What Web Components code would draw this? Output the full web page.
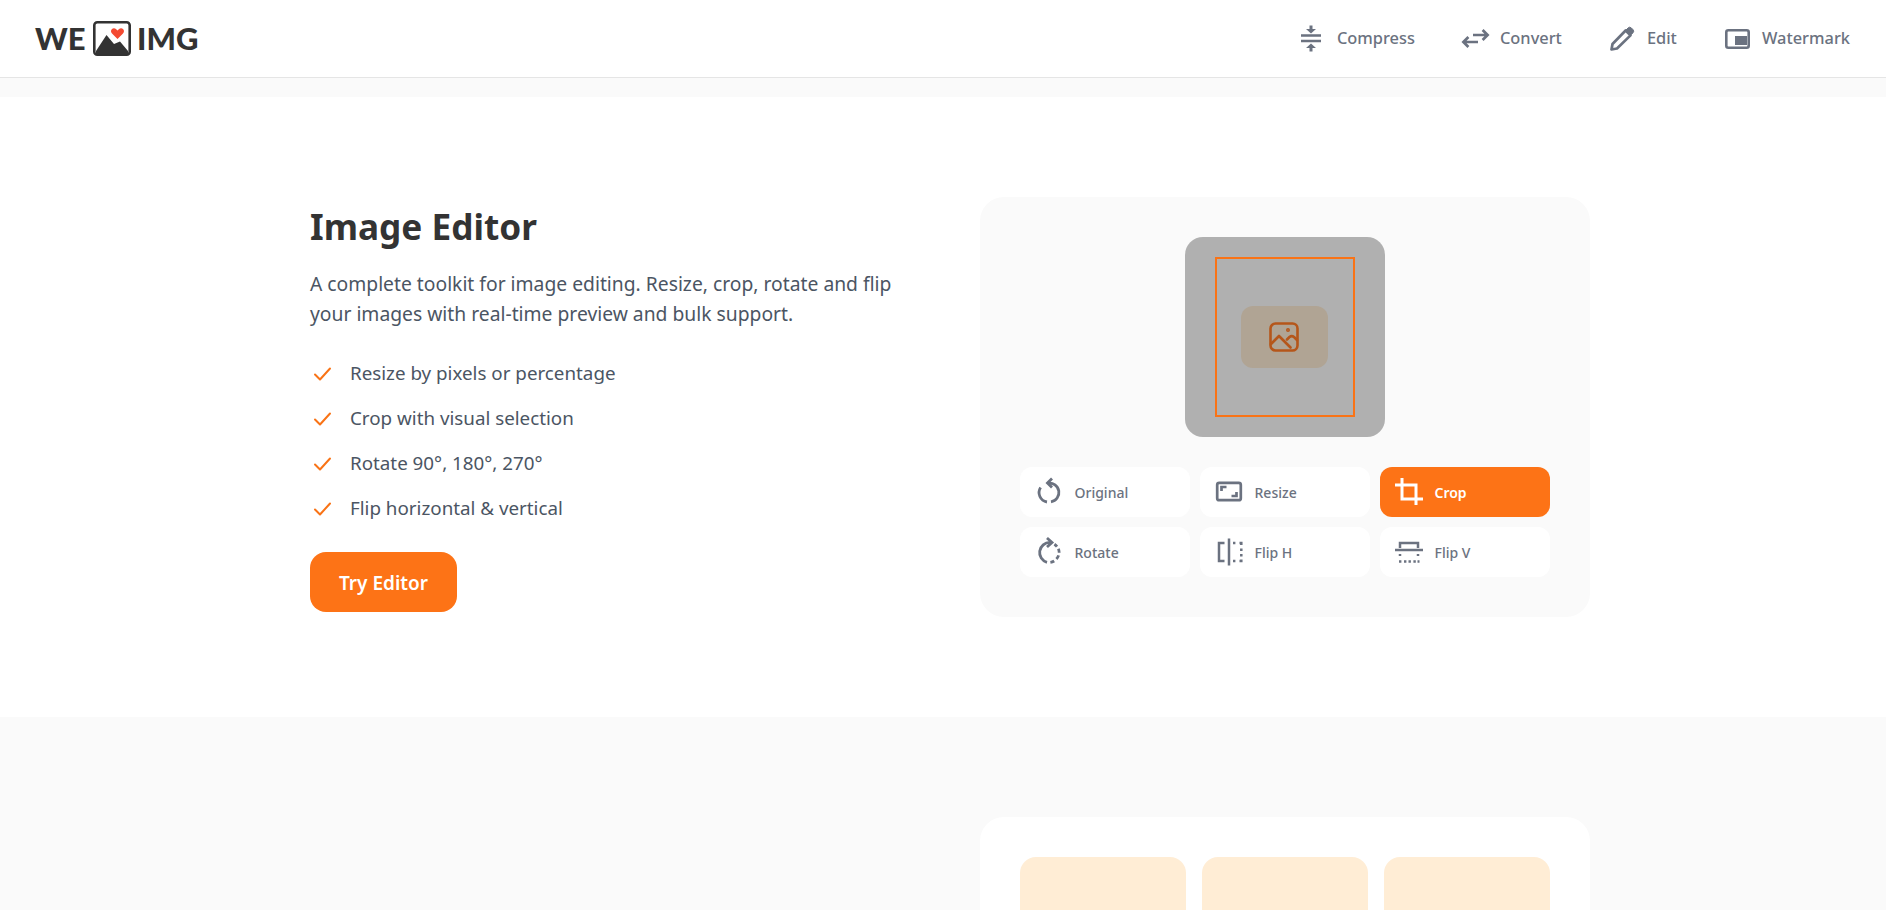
<!DOCTYPE html>
<html lang="en">
<head>
<meta charset="utf-8">
<title>WE IMG</title>
<style>
    html, body { margin: 0; height: 910px; overflow: hidden; background: #fafafa; }
    body { font-family: "Noto Sans", "Open Sans", sans-serif; color: #333; }
</style>
</head>
<body>
<site-header>
    <nav-link label="Compress">
        <svg slot="icon" width="30" height="30" viewBox="0 0 30 30" fill="none" stroke="currentColor" stroke-width="2.5">
            <path d="M4 11.600h20M4 16.900h20"/>
            <path d="M14 1.500v5" stroke-width="3"/><path d="M9 5h10l-5 4.600zM9 24h10l-5-4.600z" fill="currentColor" stroke="none"/><path d="M14 22.500v5" stroke-width="3"/>
        </svg>
    </nav-link>
    <nav-link label="Convert">
        <svg slot="icon" width="30" height="30" viewBox="0 0 30 30" fill="none" stroke="currentColor" stroke-width="2.7">
            <path d="M13 11h14M22.600 6l5 5-5 5M18 18H4M8.400 13l-5 5 5 5"/>
        </svg>
    </nav-link>
    <nav-link label="Edit">
        <svg slot="icon" width="30" height="30" viewBox="0 0 30 30" fill="none" stroke="currentColor" stroke-width="2.7" stroke-linejoin="round">
            <path d="M4.500 25.500l1-5.500L18.600 6.500l4.900 4.900L10 24.500z"/>
            <path d="M19 6l2-2a2.400 2.400 0 0 1 3.400 0l1.500 1.500a2.400 2.400 0 0 1 0 3.400l-2 2z" fill="currentColor" stroke-width="1"/>
        </svg>
    </nav-link>
    <nav-link label="Watermark">
        <svg slot="icon" width="30" height="30" viewBox="0 0 30 30" fill="none" stroke="currentColor" stroke-width="2.6">
            <rect x="4.300" y="6.300" width="22.400" height="17.400" rx="2"/><rect x="13" y="12" width="12" height="9" fill="currentColor" stroke="none"/>
        </svg>
    </nav-link>
</site-header>

<feature-section tone="white">
    <h-title slot="copy" text="Image Editor"></h-title>
    <p-lead slot="copy" text="A complete toolkit for image editing. Resize, crop, rotate and flip your images with real-time preview and bulk support."></p-lead>
    <check-list slot="copy">
        <check-item>Resize by pixels or percentage</check-item>
        <check-item>Crop with visual selection</check-item>
        <check-item>Rotate 90°, 180°, 270°</check-item>
        <check-item>Flip horizontal &amp; vertical</check-item>
    </check-list>
    <cta-button slot="copy">Try Editor</cta-button>

    <demo-panel slot="demo">
        <crop-preview></crop-preview>
        <tool-grid>
            <tool-button label="Original">
                <svg slot="icon" width="32" height="32" viewBox="0 0 32 32" fill="none" stroke="currentColor" stroke-width="2.8">
                    <path d="M15 7.200a9.400 9.400 0 0 1 3 18.600M14 26a9.400 9.400 0 0 1-6.400-14.400"/><path d="M19 2.600 14.500 7l4.500 4.400"/>
                </svg>
            </tool-button>
            <tool-button label="Resize">
                <svg slot="icon" width="32" height="32" viewBox="0 0 32 32" fill="none" stroke="currentColor" stroke-width="2.7">
                    <rect x="4.200" y="6.800" width="23.600" height="17.400" rx="2"/><path d="M8.500 15v-4h5M23.500 16v4h-5"/>
                </svg>
            </tool-button>
            <tool-button label="Crop" active>
                <svg slot="icon" width="32" height="32" viewBox="0 0 32 32" fill="none" stroke="currentColor" stroke-width="3">
                    <path d="M9 2v21h21M2 9h21v20"/>
                </svg>
            </tool-button>
            <tool-button label="Rotate">
                <svg slot="icon" width="32" height="32" viewBox="0 0 32 32" fill="none" stroke="currentColor" stroke-width="2.8">
                    <path d="M17 6.400A10.200 10.200 0 0 0 14 26.400"/><path d="M14 2l5 4.500-5 4.500"/>
                    <path d="M17.400 26.400a10.200 10.200 0 0 0 3.800-1.400M23.400 23a10.200 10.200 0 0 0 2.200-3.600M26.200 16.800a10.200 10.200 0 0 0-.8-4M24 10.600a10.200 10.200 0 0 0-2.600-2.400"/>
                </svg>
            </tool-button>
            <tool-button label="Flip H">
                <svg slot="icon" width="32" height="32" viewBox="0 0 32 32" fill="none" stroke="currentColor" stroke-width="2.500">
                    <path d="M16 2.500v27M11.500 7H6v18h5.500"/><path d="M20 7h2.400M26.500 7h1.800v2M28.300 12.500v2.500M28.300 18v2.500M28.300 23.500V25h-1.800M22.400 25H20"/>
                </svg>
            </tool-button>
            <tool-button label="Flip V">
                <svg slot="icon" width="32" height="32" viewBox="0 0 32 32" fill="none" stroke="currentColor" stroke-width="2.500">
                    <path d="M2 14h28M7 12V7h18v5"/><path d="M7 18v2M25 18v2M6 25.500h2.400M11 25.500h2.400M15.500 25.500h2.400M20.400 25.500h2.400M24.500 25.500H26.500"/>
                </svg>
            </tool-button>
        </tool-grid>
    </demo-panel>
</feature-section>

<feature-section tone="grey">
    <demo-panel slot="demo" tone="white">
        <tint-cards></tint-cards>
    </demo-panel>
</feature-section>

<script>
const define = (name, css, html) => {
    customElements.define(name, class extends HTMLElement {
        constructor() {
            super();
            this.attachShadow({ mode: 'open' });
        }
        connectedCallback() {
            const attr = key => this.getAttribute(key) || '';
            this.shadowRoot.innerHTML = `<style>${css}</style>${html(attr)}`;
        }
    });
};

define('site-header', `
    :host { display: flex; align-items: center; justify-content: space-between; height: 77px; padding: 0 36px 0 35px;
        background: #fff; border-bottom: 1px solid #e5e5e5; }
    .logo { display: flex; align-items: center; font: 900 31px/1 Lato, sans-serif; color: #333; }
    .we { width: 58px; }
    svg { display: block; margin-right: 6px; }
    nav { display: flex; gap: 45px; }
`, () => `
    <div class="logo">
        <span class="we">WE</span>
        <svg width="38" height="35" viewBox="0 0 38 35">
            <rect x="1.300" y="1.300" width="35.400" height="32.400" rx="3" fill="#fff" stroke="#333" stroke-width="2.600"/>
            <path d="M3 30 13.500 14 21 23l6-2.500L35 30v3.500H3z" fill="#333"/>
            <path d="M24.500 18 19 12.500c-1.500-1.600-1.200-3.600 0-4.600 1.400-1 3-.8 4.200.4l1.300 1.300 1.300-1.300c1.200-1.200 2.800-1.400 4.200-.4 1.200 1 1.500 3 0 4.600z" fill="#f44a32"/>
        </svg>
        <span>IMG</span>
    </div>
    <nav><slot></slot></nav>
`);

define('nav-link', `
    :host { display: flex; align-items: center; gap: 10px; font: 500 16.400px/1 "Noto Sans", sans-serif; color: #6b7280; }
`, a => `<slot name="icon"></slot><span>${a('label')}</span>`);

define('feature-section', `
    :host { display: grid; grid-template-columns: 591px 610px; column-gap: 79px; padding: 100px 0 100px 310px; }
    :host([tone=white]) { background: #fff; margin-top: 19px; }
    .copy { display: flex; flex-direction: column; align-items: flex-start; padding-top: 4px; }
    .demo { grid-column: 2; }
`, () => `<div class="copy"><slot name="copy"></slot></div><div class="demo"><slot name="demo"></slot></div>`);

define('h-title', `
    :host { display: block; font: 700 35.200px/50px "Noto Sans", sans-serif; color: #333; margin-bottom: 18px; }
`, a => `<span>${a('text')}</span>`);

define('p-lead', `
    :host { display: block; max-width: 591px; font: 400 19.300px/30px "Noto Sans", sans-serif; color: #4b5563; margin-bottom: 22px; }
`, a => `<span>${a('text')}</span>`);

define('check-list', `
    :host { display: flex; flex-direction: column; margin-bottom: 21px; }
`, () => `<slot></slot>`);

define('check-item', `
    :host { display: flex; align-items: center; gap: 18px; height: 45px; font: 400 18.800px/1 "Noto Sans", sans-serif; color: #4b5563; }
    svg { margin-left: 3px; flex: none; }
`, () => `
    <svg width="19" height="16" viewBox="0 0 19 16" fill="none" stroke="#f97316" stroke-width="2" stroke-linecap="round" stroke-linejoin="round"><path d="M2 8.500 7 13.500 17 2.500"/></svg>
    <slot></slot>
`);

define('cta-button', `
    :host { display: flex; align-items: center; justify-content: center; width: 147px; height: 60px; border-radius: 16px;
        background: #fd7316; color: #fff; font: 600 19px/1 "Noto Sans", sans-serif; }
    span { padding-top: 2px; }
`, () => `<span><slot></slot></span>`);

define('demo-panel', `
    :host { display: block; padding: 40px; border-radius: 24px; background: #fafafa; min-height: 340px; }
    :host([tone=white]) { background: #fff; }
`, () => `<slot></slot>`);

define('crop-preview', `
    :host { display: flex; align-items: center; justify-content: center; position: relative; width: 200px; height: 200px;
        margin: 0 auto 30px; border-radius: 18px; background: #b0b0b0; }
    .crop { position: absolute; left: 30px; top: 20px; width: 136px; height: 156px; border: 2px solid #f97316; }
    .tile { display: flex; align-items: center; justify-content: center; width: 87px; height: 62px; margin-right: 2px; border-radius: 12px; background: #b0a494; }
`, () => `
    <div class="tile">
        <svg width="30" height="30" viewBox="0 0 30 30" fill="none" stroke="#b5561a" stroke-width="2.600" stroke-linecap="round" stroke-linejoin="round">
            <rect x="1.500" y="1.500" width="27" height="27" rx="5"/>
            <path d="M2 22l8-8 9 9 2.500 2.500M18 17.500l2.500-2.500c1.500-1.300 3-1.300 4.500 0l3 3"/>
            <circle cx="19" cy="8" r=".7" fill="#b5561a"/>
        </svg>
    </div>
    <div class="crop"></div>
`);

define('tool-grid', `
    :host { display: grid; grid-template-columns: repeat(3, 170px); gap: 10px; justify-content: center; }
`, () => `<slot></slot>`);

define('tool-button', `
    :host { display: flex; align-items: center; gap: 9.500px; height: 50px; padding-left: 13px; border-radius: 12px; background: #fff;
        color: #6b7280; font: 500 14px/1 "Noto Sans", sans-serif; }
    :host([active]) { background: #fd7316; color: #fff; font-weight: 600; }
    span { padding-top: 1px; }
`, a => `<slot name="icon"></slot><span>${a('label')}</span>`);

define('tint-cards', `
    :host { display: grid; grid-template-columns: repeat(3, 1fr); gap: 16px; }
    div { height: 160px; border-radius: 16px; background: #ffedd5; }
`, () => `<div></div><div></div><div></div>`);
</script>
</body>
</html>
